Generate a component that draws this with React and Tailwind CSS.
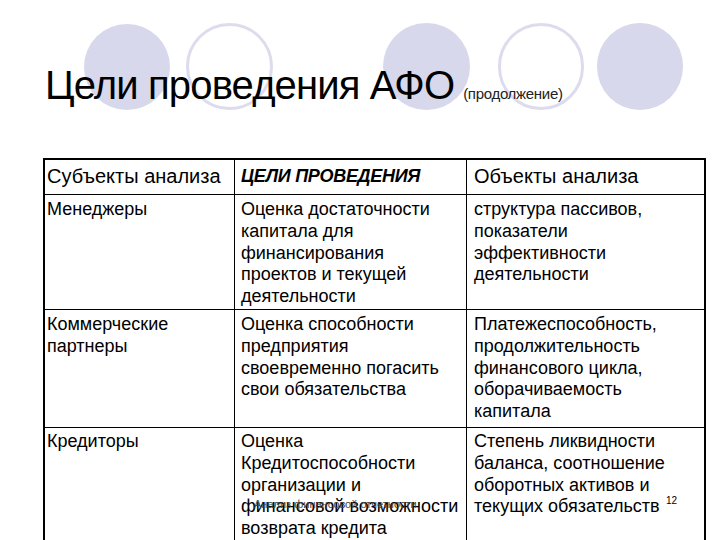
import React from "react";

const rows = [
  {
    a: ["Менеджеры"],
    b: ["Оценка достаточности", "капитала для", "финансирования", "проектов и текущей", "деятельности"],
    c: ["структура пассивов,", "показатели", "эффективности", "деятельности"],
    h: "h-[115px]",
    pt: "pt-[4px]",
  },
  {
    a: ["Коммерческие", "партнеры"],
    b: ["Оценка способности", "предприятия", "своевременно погасить", "свои обязательства"],
    c: ["Платежеспособность,", "продолжительность", "финансового цикла,", "оборачиваемость", "капитала"],
    h: "h-[118px]",
    pt: "pt-[4px]",
  },
  {
    a: ["Кредиторы"],
    b: ["Оценка", "Кредитоспособности", "организации и", "финансовой возможности", "возврата кредита"],
    c: ["Степень ликвидности", "баланса, соотношение", "оборотных активов и", "текущих обязательств"],
    h: "h-[130px]",
    pt: "pt-[3px]",
  },
];

function Lines({ items }) {
  return (
    <>
      {items.map((t, i) => (
        <div key={i} className="whitespace-nowrap">{t}</div>
      ))}
    </>
  );
}

export default function App() {
  return (
    <div
      className="relative w-[720px] h-[540px] overflow-hidden bg-white text-black"
      style={{ fontFamily: '"Liberation Sans", Arial, sans-serif' }}
    >
      {/* decorative circles */}
      <div className="absolute left-[84px] top-[24px] w-[86px] h-[86px] rounded-full bg-[#d8d8ec]" />
      <div className="absolute left-[186px] top-[23px] w-[87px] h-[87px] rounded-full border-[3px] border-[#dcdcee] bg-white" />
      <div className="absolute left-[383px] top-[23px] w-[87px] h-[87px] rounded-full bg-[#d8d8ec]" />
      <div className="absolute left-[498px] top-[23px] w-[86px] h-[87px] rounded-full border-[3px] border-[#dcdcee] bg-white" />
      <div className="absolute left-[597px] top-[23px] w-[86px] h-[87px] rounded-full bg-[#d8d8ec]" />

      <div className="relative flex flex-col pl-[43px] pt-[65px]">
        <div className="flex items-baseline pl-[2px]">
          <span className="text-[40px] leading-none tracking-[-0.85px]">Цели проведения АФО</span>
          <span className="ml-[9px] text-[15px] leading-none tracking-[-0.3px] text-[#222]">(продолжение)</span>
        </div>

        <div className="mt-[53px] w-[663px] border-2 border-black bg-white text-[18px] leading-[21.8px]">
          <div className="grid grid-cols-[190px_232px_1fr] h-[35px] border-b border-black text-[20px]">
            <div className="flex items-center pl-[2px] border-r border-black whitespace-nowrap">Субъекты анализа</div>
            <div className="flex items-center pl-[6px] border-r border-black font-bold italic text-[18px] tracking-[-0.3px] whitespace-nowrap">ЦЕЛИ ПРОВЕДЕНИЯ</div>
            <div className="flex items-center pl-[7px] whitespace-nowrap">Объекты анализа</div>
          </div>
          {rows.map((r, i) => (
            <div
              key={i}
              className={`grid grid-cols-[190px_232px_1fr] ${r.h} ${i < rows.length - 1 ? "border-b border-black" : ""}`}
            >
              <div className={`pl-[2px] ${r.pt} border-r border-black`}><Lines items={r.a} /></div>
              <div className={`relative pl-[6px] ${r.pt} border-r border-black`}>
                <Lines items={r.b} />
              </div>
              <div className={`relative pl-[7px] ${r.pt}`}>
                <Lines items={r.c} />
                {i === 2 && (
                  <span className="absolute left-[199px] top-[68px] text-[10px] leading-none">12</span>
                )}
              </div>
            </div>
          ))}
        </div>
      </div>

      {/* footer overlay text */}
      <div className="absolute left-[254px] top-[499px] text-[11px] leading-none text-[#444] whitespace-nowrap">
        Анализ финансовой отчетности
      </div>
    </div>
  );
}
